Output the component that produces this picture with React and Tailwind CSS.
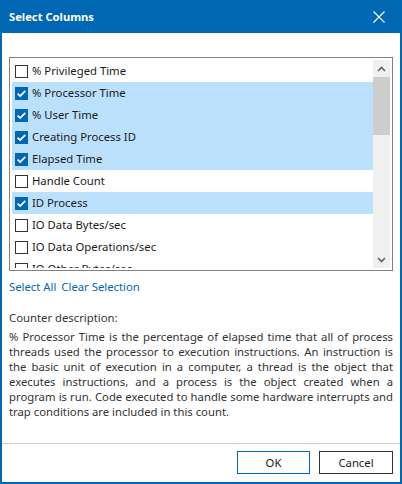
import React from 'react'

const ROWS = [
  { label: '% Privileged Time', checked: false },
  { label: '% Processor Time', checked: true },
  { label: '% User Time', checked: true },
  { label: 'Creating Process ID', checked: true },
  { label: 'Elapsed Time', checked: true },
  { label: 'Handle Count', checked: false },
  { label: 'ID Process', checked: true },
  { label: 'IO Data Bytes/sec', checked: false },
  { label: 'IO Data Operations/sec', checked: false },
  { label: 'IO Other Bytes/sec', checked: false },
]

const DESCRIPTION = [
  '% Processor Time is the percentage of elapsed time that all of process',
  'threads used the processor to execution instructions. An instruction is',
  'the basic unit of execution in a computer, a thread is the object that',
  'executes instructions, and a process is the object created when a',
  'program is run. Code executed to handle some hardware interrupts and',
  'trap conditions are included in this count.',
]

function CheckBox({ checked }) {
  if (checked) {
    return (
      <svg width="13" height="13" viewBox="0 0 13 13" className="shrink-0">
        <rect x="0" y="0" width="13" height="13" fill="#0067b4" />
        <path d="M2.6 6.6 L5.2 9.1 L10.3 3.9" fill="none" stroke="#ffffff" strokeWidth="1.8" />
      </svg>
    )
  }
  return <div className="w-[13px] h-[13px] shrink-0 border border-[#333333] bg-white" />
}

function ListRow({ label, checked }) {
  return (
    <div className={`h-[22px] shrink-0 flex items-center pl-[3px] gap-[4px] ${checked ? 'bg-[#bbe0fc]' : ''}`}>
      <CheckBox checked={checked} />
      <span className="text-[11.3px] leading-[16px] text-[#1a1a1a] whitespace-nowrap">{label}</span>
    </div>
  )
}

function ScrollBar() {
  return (
    <div className="w-[17px] shrink-0 bg-[#f0f0f0] flex flex-col">
      <div className="h-[17px] flex items-center justify-center">
        <svg width="9" height="6" viewBox="0 0 9 6">
          <path d="M1 5 L4.5 1.5 L8 5" fill="none" stroke="#606060" strokeWidth="1.6" />
        </svg>
      </div>
      <div className="h-[58px] bg-[#cdcdcd]" />
      <div className="flex-1" />
      <div className="h-[17px] flex items-center justify-center">
        <svg width="9" height="6" viewBox="0 0 9 6">
          <path d="M1 1 L4.5 4.5 L8 1" fill="none" stroke="#606060" strokeWidth="1.6" />
        </svg>
      </div>
    </div>
  )
}

export default function App() {
  return (
    <div
      className="w-[402px] h-[484px] bg-[#0067b4] p-[2px] pt-0 flex flex-col"
      style={{ fontFamily: '"Noto Sans", "Segoe UI", sans-serif' }}
    >
      <div className="h-[33px] shrink-0 flex items-center justify-between pl-[7px] pr-[15px]">
        <span className="text-white text-[11.2px] font-bold leading-none">Select Columns</span>
        <svg width="12" height="12" viewBox="0 0 12 12">
          <path d="M0.5 0.5 L11.5 11.5 M11.5 0.5 L0.5 11.5" stroke="#ffffff" strokeWidth="1.1" />
        </svg>
      </div>

      <div className="flex-1 bg-white flex flex-col">
        <div className="px-[7px] pt-[24px] flex flex-col">
          <div className="h-[214px] border border-[#828282] p-[2px] flex">
            <div className="flex-1 flex flex-col overflow-hidden">
              {ROWS.map(r => (
                <ListRow key={r.label} label={r.label} checked={r.checked} />
              ))}
            </div>
            <ScrollBar />
          </div>

          <div className="mt-[8px] flex gap-[5px] text-[11.3px] leading-[16px] text-[#0067b4]">
            <span>Select All</span>
            <span>Clear Selection</span>
          </div>

          <div className="mt-[15px] text-[11.3px] leading-[16px] text-[#333333]">Counter description:</div>

          <div className="mt-[3px] text-[11.3px] leading-[15px] text-[#333333]">
            {DESCRIPTION.map((line, i) => (
              <div
                key={i}
                className={`whitespace-nowrap ${i < DESCRIPTION.length - 1 ? 'text-justify [text-align-last:justify]' : ''}`}
              >
                {line}
              </div>
            ))}
          </div>
        </div>

        <div className="flex-1" />

        <div className="border-t border-[#cccccc] h-[39px] shrink-0 flex justify-end items-start pt-[7px] pr-[7px] gap-[9px]">
          <button className="w-[73px] h-[23px] border border-[#0067b4] bg-white text-[11.3px] text-[#1a1a1a] leading-none">
            OK
          </button>
          <button className="w-[74px] h-[23px] border border-[#333333] bg-white text-[11.3px] text-[#1a1a1a] leading-none">
            Cancel
          </button>
        </div>
      </div>
    </div>
  )
}
